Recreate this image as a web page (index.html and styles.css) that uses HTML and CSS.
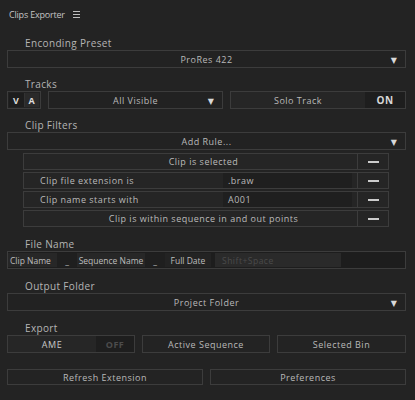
FILE: index.html
```html
<!DOCTYPE html>
<html>
<head>
<meta charset="utf-8">
<link rel="stylesheet" href="styles.css">
</head>
<body>
<div class="panel">
  <div class="title">
    <span class="title-text">Clips Exporter</span>
    <svg class="menu" width="7" height="7" viewBox="0 0 7 7"><rect x="0" y="0" width="7" height="1" fill="#bdbdbd"/><rect x="0" y="3" width="7" height="1" fill="#bdbdbd"/><rect x="0" y="6" width="7" height="1" fill="#bdbdbd"/></svg>
  </div>

  <div class="label first">Enconding Preset</div>
  <div class="box dropdown"><span>ProRes 422</span><i class="arrow">▼</i></div>

  <div class="label">Tracks</div>
  <div class="tracks">
    <div class="box va"><span class="v">V</span><span class="a">A</span></div>
    <div class="box dropdown"><span>All Visible</span><i class="arrow">▼</i></div>
    <div class="box toggle"><span class="tg-label">Solo Track</span><span class="tg-state on">ON</span></div>
  </div>

  <div class="label">Clip Filters</div>
  <div class="box dropdown"><span>Add Rule...</span><i class="arrow">▼</i></div>
  <div class="filters">
    <div class="filter"><div class="f-main center">Clip is selected</div><div class="minus"><b></b></div></div>
    <div class="filter"><div class="f-main"><span class="f-name">Clip file extension is</span><span class="f-value">.braw</span></div><div class="minus"><b></b></div></div>
    <div class="filter"><div class="f-main"><span class="f-name">Clip name starts with</span><span class="f-value">A001</span></div><div class="minus"><b></b></div></div>
    <div class="filter"><div class="f-main center">Clip is within sequence in and out points</div><div class="minus"><b></b></div></div>
  </div>

  <div class="label gap10">File Name</div>
  <div class="box fname">
    <span class="chip c1">Clip Name</span>
    <span class="sep">_</span>
    <span class="chip c2">Sequence Name</span>
    <span class="sep">_</span>
    <span class="chip c3">Full Date</span>
    <span class="hint">Shift+Space</span>
  </div>

  <div class="label gap10">Output Folder</div>
  <div class="box dropdown"><span>Project Folder</span><i class="arrow">▼</i></div>

  <div class="label gap10">Export</div>
  <div class="export">
    <div class="box toggle"><span class="tg-label">AME</span><span class="tg-state off">OFF</span></div>
    <div class="box btn">Active Sequence</div>
    <div class="box btn">Selected Bin</div>
  </div>

  <div class="bottom">
    <div class="box btn small">Refresh Extension</div>
    <div class="box btn small">Preferences</div>
  </div>
</div>
</body>
</html>
```

FILE: styles.css
```css
html, body {
  margin: 0;
  padding: 0;
  background: #232323;
}
body {
  width: 415px;
  height: 400px;
  overflow: hidden;
  font-family: "Open Sans", "DejaVu Sans", sans-serif;
  color: #b8b8b8;
}
.panel {
  padding: 0 9px 0 7px;
}
.title {
  height: 28px;
  display: flex;
  align-items: center;
  padding-left: 2px;
  gap: 8px;
}
.title-text {
  font-size: 9px;
  color: #c4c4c4;
  letter-spacing: -0.2px;
}
.menu {
  margin-top: 1px;
}
.label {
  height: 14px;
  line-height: 14px;
  margin-top: 9px;
  padding-left: 18px;
  font-size: 10px;
  color: #b5b5b5;
  letter-spacing: 0.35px;
}
.label.first {
  margin-top: 8px;
}
.label.gap10 {
  margin-top: 10px;
}
.box {
  box-sizing: border-box;
  border: 1px solid #3c3c3c;
  background: #222222;
  height: 18px;
  font-size: 9px;
  letter-spacing: 0.5px;
  color: #b9b9b9;
}
.dropdown {
  position: relative;
  display: flex;
  align-items: center;
  justify-content: center;
}
.arrow {
  position: absolute;
  right: 8px;
  top: 3px;
  font-style: normal;
  font-size: 8px;
  color: #d8d8d8;
  letter-spacing: 0;
}
.tracks {
  display: grid;
  grid-template-columns: 34px 175px 1fr;
  gap: 7px;
}
.va {
  display: flex;
  font-weight: bold;
  color: #dcdcdc;
  padding: 1px;
}
.va span {
  flex: 1;
  display: flex;
  align-items: center;
  justify-content: center;
}
.va .v {
  background: #1d1d1d;
}
.va .a {
  background: #2a2a2a;
  border-left: 1px solid #333;
}
.toggle {
  display: flex;
}
.tg-label {
  flex: 1;
  display: flex;
  align-items: center;
  justify-content: center;
  background: #262626;
}
.tg-state {
  width: 40px;
  display: flex;
  align-items: center;
  justify-content: center;
  background: #1e1e1e;
  font-weight: bold;
}
.tg-state.on {
  color: #d8d8d8;
  font-size: 10px;
}
.tg-state.off {
  width: 38px;
  color: #4c4c4c;
}
.export .tg-label {
  color: #c8c8c8;
}
.filters {
  margin: 3px 17px 0 16px;
  display: flex;
  flex-direction: column;
  gap: 2px;
}
.filter {
  box-sizing: border-box;
  height: 17px;
  border: 1px solid #3c3c3c;
  background: #252525;
  display: flex;
  font-size: 9px;
  letter-spacing: 0.5px;
  color: #bababa;
}
.f-main {
  flex: 1;
  display: flex;
  align-items: center;
  padding-right: 5px;
}
.f-main.center {
  justify-content: center;
  padding-left: 31px;
}
.f-name {
  width: 199px;
  padding-left: 16px;
  box-sizing: border-box;
}
.f-value {
  flex: 1;
  align-self: stretch;
  display: flex;
  align-items: center;
  padding-left: 5px;
  background: #1f1f1f;
}
.minus {
  width: 30px;
  border-left: 1px solid #3c3c3c;
  display: flex;
  align-items: center;
  justify-content: center;
}
.minus b {
  width: 11px;
  height: 2px;
  background: #cccccc;
}
.fname {
  display: flex;
  align-items: stretch;
  background: #1d1d1d;
  font-size: 8.5px;
  letter-spacing: 0;
  padding: 1px 0;
}
.chip {
  display: flex;
  align-items: center;
  background: #272727;
  color: #bdbdbd;
}
.c1 {
  width: 49px;
  padding-left: 2px;
  box-sizing: border-box;
}
.c2 {
  width: 68px;
  justify-content: center;
}
.c3 {
  width: 46px;
  justify-content: center;
  background: #232323;
}
.sep {
  width: 20px;
  display: flex;
  align-items: center;
  justify-content: center;
  color: #bdbdbd;
  background: #1f1f1f;
}
.hint {
  width: 126px;
  margin-left: 4px;
  display: flex;
  align-items: center;
  padding-left: 7px;
  box-sizing: border-box;
  background: #2a2a2a;
  color: #4a4a4a;
  letter-spacing: 0.5px;
  font-size: 8.5px;
}
.export {
  display: grid;
  grid-template-columns: 128px 128px 1fr;
  gap: 7px;
}
.btn {
  display: flex;
  align-items: center;
  justify-content: center;
  background: #232323;
}
.bottom {
  margin-top: 16px;
  display: grid;
  grid-template-columns: 1fr 1fr;
  gap: 7px;
}
.btn.small {
  height: 16px;
}
```
